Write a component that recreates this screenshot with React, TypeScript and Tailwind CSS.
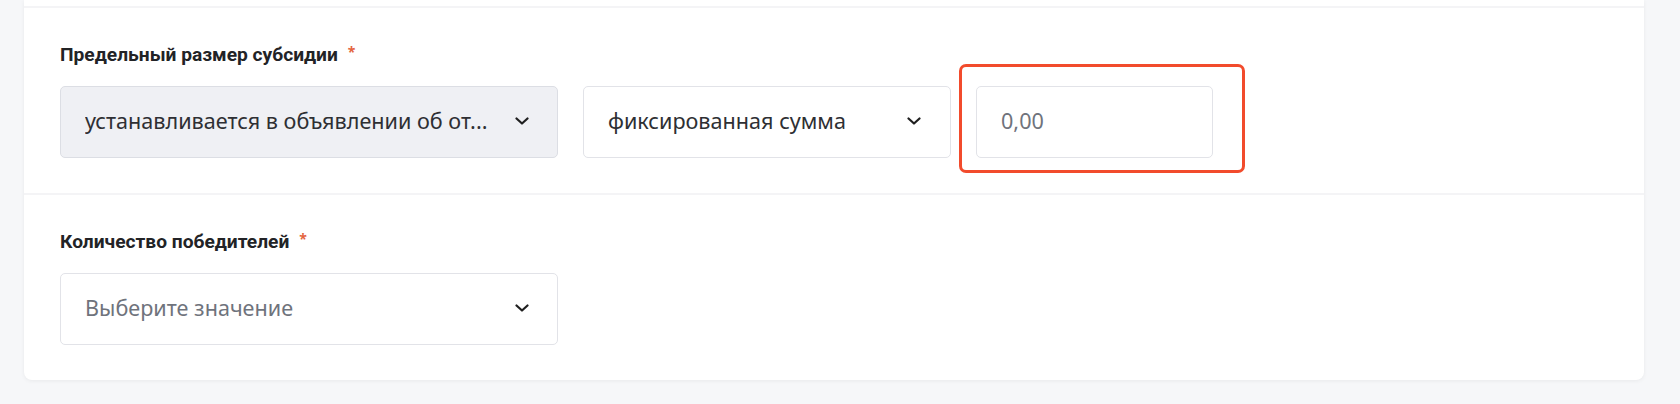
import React from "react";

function Chevron() {
  return (
    <svg width="14" height="8" viewBox="0 0 14 8" fill="none" className="shrink-0">
      <path d="M1.5 1.5L7 6.5L12.5 1.5" stroke="#1f1f1f" strokeWidth="2.2" strokeLinecap="round" strokeLinejoin="round" />
    </svg>
  );
}

function Label({ text }: { text: string }) {
  return (
    <div className="flex items-start h-[23px] mb-[19px]">
      <span className="text-[19.2px] leading-[22px] font-bold text-[#222326]" style={{ fontFamily: "Roboto, 'Noto Sans', sans-serif" }}>
        {text}
      </span>
      <span className="ml-[10px] mt-[1px] text-[14px] leading-[14px] text-[#e4653f] font-bold">*</span>
    </div>
  );
}

export default function App() {
  const font = { fontFamily: "'Noto Sans', 'Open Sans', sans-serif" };
  return (
    <div className="w-[1680px] h-[404px] bg-[#f6f7f9] pl-[24px] pr-[36px] overflow-hidden" style={font}>
      <div className="bg-white rounded-b-[8px] shadow-[0_1px_4px_rgba(0,0,0,0.06)]">
        <div className="h-[6px]" />
        <div className="h-[2px] bg-[#f4f4f6]" />
        <section className="px-[36px] pt-[36px] pb-[35px]">
          <Label text="Предельный размер субсидии" />
          <div className="relative flex gap-[25px]">
            <div className="w-[498px] h-[72px] rounded-[5px] border border-[#dcdee4] bg-[#eff0f4] flex items-center justify-between pl-[24px] pr-[28px] pb-[2px]">
              <span className="text-[21.6px] text-[#2e2f33] truncate">устанавливается в объявлении об от...</span>
              <Chevron />
            </div>
            <div className="w-[368px] h-[72px] rounded-[5px] border border-[#e2e3e8] bg-white flex items-center justify-between pl-[24px] pr-[29px] pb-[2px]">
              <span className="text-[21.6px] text-[#2e2f33]">фиксированная сумма</span>
              <Chevron />
            </div>
            <div className="w-[237px] h-[72px] rounded-[5px] border border-[#e2e3e8] bg-white flex items-center pl-[24px] pb-[2px]">
              <span className="text-[21.6px] text-[#6f737c]">0,00</span>
            </div>
            <div className="absolute left-[899px] top-[-22px] w-[286px] h-[109px] border-[3px] border-[#f24b2c] rounded-[7px] pointer-events-none" />
          </div>
        </section>
        <div className="h-[2px] bg-[#f4f4f6]" />
        <section className="px-[36px] pt-[36px] pb-[35px]">
          <Label text="Количество победителей" />
          <div className="w-[498px] h-[72px] rounded-[5px] border border-[#e2e3e8] bg-white flex items-center justify-between pl-[24px] pr-[28px] pb-[2px]">
            <span className="text-[21.6px] text-[#6f737c]">Выберите значение</span>
            <Chevron />
          </div>
        </section>
      </div>
    </div>
  );
}
